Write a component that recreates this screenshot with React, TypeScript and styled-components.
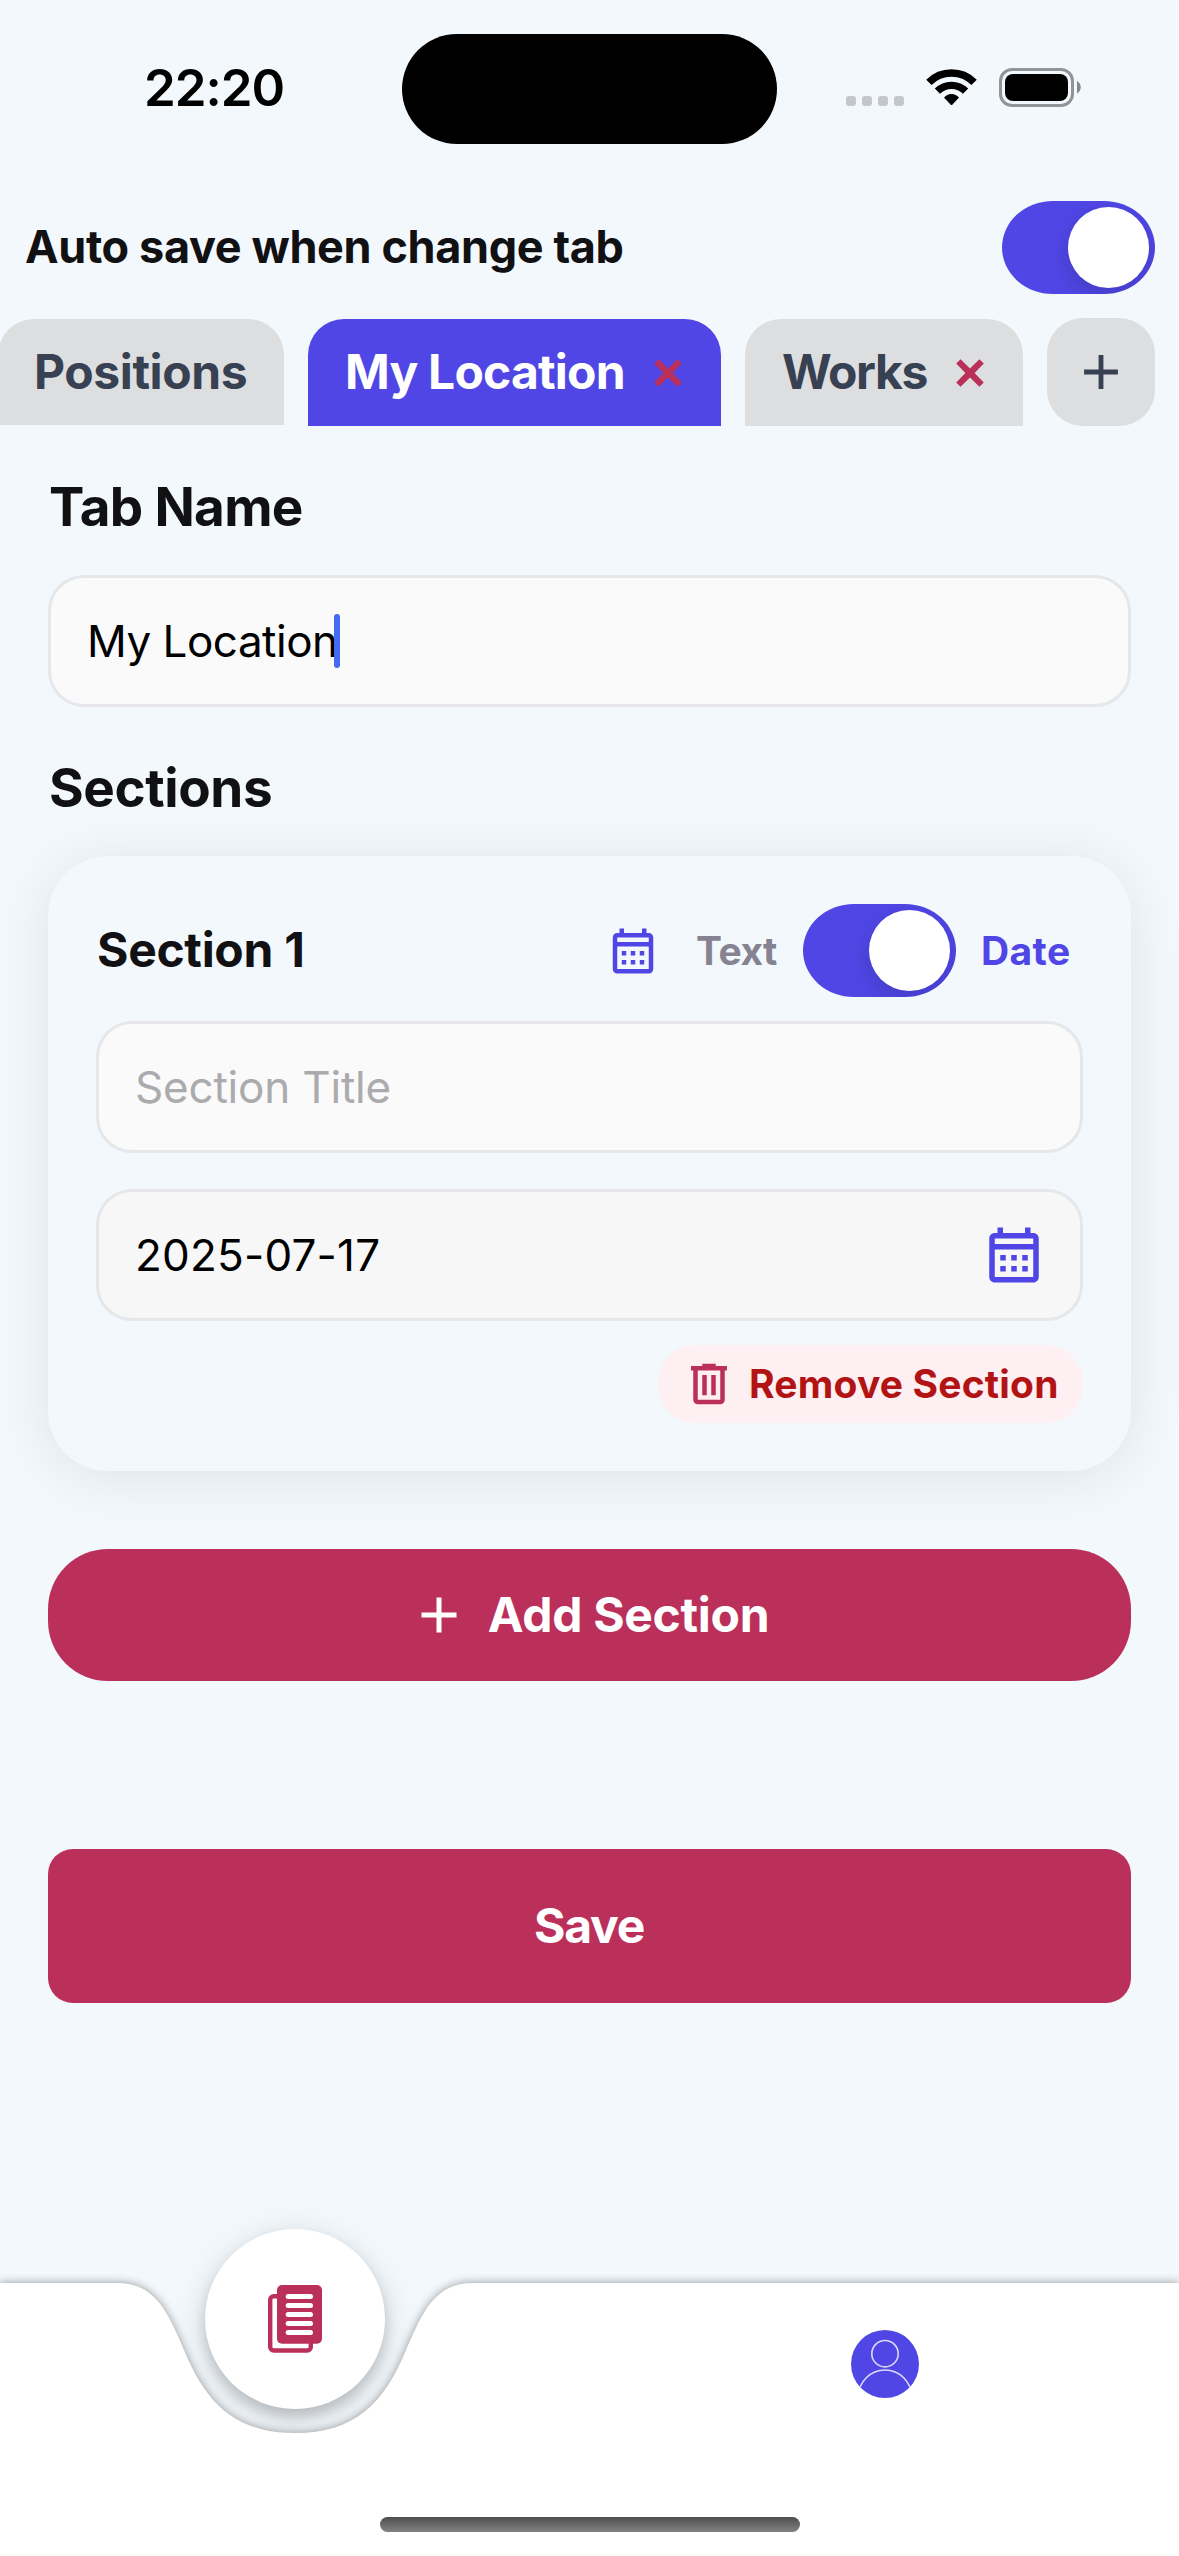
import React from 'react';
import styled, { createGlobalStyle } from 'styled-components';

const color = {
  page: '#f3f8fc',
  primary: '#4f46e5',
  accent: '#bb305b',
  tab: '#dddee0',
  slate: '#374151',
  ink: '#111113',
  line: '#e5e7eb',
};

const GlobalStyle = createGlobalStyle`
  * { box-sizing: border-box; }
  body {
    margin: 0;
    background: ${color.page};
    font-family: Inter, "Liberation Sans", sans-serif;
  }
  svg { display: block; flex: none; }
`;

const Screen = styled.main`
  display: flex;
  flex-direction: column;
  width: 1179px;
  height: 2556px;
  overflow: hidden;
  background: ${color.page};
`;

/* ---------- status bar ---------- */

const StatusBar = styled.header`
  display: grid;
  grid-template-columns: 402px 375px 1fr;
  height: 177px;
  flex: none;
`;

const Clock = styled.time`
  padding-left: 144px;
  margin-top: 57px;
  font-size: 51px;
  line-height: 62px;
  font-weight: 600;
  letter-spacing: -1px;
  color: #000;
`;

const Island = styled.div`
  height: 110px;
  margin-top: 34px;
  border-radius: 55px;
  background: #000;
`;

const StatusIcons = styled.div`
  display: flex;
  align-items: flex-start;
  gap: 22px;
  padding: 68px 0 0 69px;
`;

const SignalDots = styled.div`
  display: flex;
  gap: 6px;
  margin-top: 28px;
`;

const Dot = styled.i`
  width: 10px;
  height: 10px;
  border-radius: 3px;
  background: #c4c7cb;
`;

/* ---------- shared controls ---------- */

const Track = styled.button`
  display: flex;
  justify-content: flex-end;
  align-items: center;
  flex: none;
  width: 153px;
  height: 93px;
  padding: 0 6px;
  border: 0;
  border-radius: 51px / 46.5px;
  overflow: hidden;
  background: ${color.primary};
`;

const Thumb = styled.span`
  width: 81px;
  height: 81px;
  border-radius: 50%;
  background: #fff;
  box-shadow: 0 8px 22px rgba(0, 0, 0, 0.14);
`;

const Toggle = () => (
  <Track role="switch" aria-checked="true">
    <Thumb />
  </Track>
);

/* ---------- auto save + tabs ---------- */

const AutoSave = styled.section`
  display: flex;
  align-items: center;
  justify-content: space-between;
  flex: none;
  margin-top: 24px;
  padding: 0 24px 0 25px;
`;

const AutoSaveLabel = styled.span`
  padding-bottom: 2px;
  font-size: 45px;
  font-weight: 700;
  letter-spacing: -0.36px;
  color: ${color.ink};
`;

const TabStrip = styled.nav`
  display: flex;
  align-items: flex-end;
  gap: 24px;
  flex: none;
  height: 108px;
  margin: 24px 0 0 -2px;
`;

const Tab = styled.div<{ $width: number; $active?: boolean; $tracking: number }>`
  display: flex;
  align-items: center;
  justify-content: space-between;
  flex: none;
  width: ${(p) => p.$width}px;
  height: 107px;
  padding: 0 32px 0 37px;
  border-radius: 36px 36px 0 0;
  background: ${(p) => (p.$active ? color.primary : color.tab)};
  color: ${(p) => (p.$active ? '#fff' : color.slate)};
  font-size: 48px;
  font-weight: 700;
  letter-spacing: ${(p) => p.$tracking}px;
  white-space: nowrap;
`;

const PinnedTab = styled(Tab)`
  height: 106px;
  margin-bottom: 1px;
  padding-left: 36px;
`;

const TabName = styled.span`
  padding-bottom: 2px;
`;

const AddTab = styled.button`
  display: flex;
  align-items: center;
  justify-content: center;
  width: 108px;
  height: 108px;
  padding: 0;
  border: 0;
  border-radius: 36px;
  background: ${color.tab};
  color: ${color.slate};
`;

/* ---------- form ---------- */

const Form = styled.section`
  display: flex;
  flex-direction: column;
  flex: none;
  padding: 48px 48px 0;
`;

const Heading = styled.h2<{ $tracking: number }>`
  margin: 0 0 35px;
  padding: 1px 0 0 1px;
  font-size: 53px;
  line-height: 65px;
  font-weight: 700;
  letter-spacing: ${(p) => p.$tracking}px;
  color: ${color.ink};
`;

const Field = styled.div<{ $muted?: boolean; $placeholder?: boolean; $tracking: number; $after: number }>`
  display: flex;
  align-items: center;
  height: 132px;
  margin-bottom: ${(p) => p.$after}px;
  padding: 0 33px 0 36px;
  border: 3px solid ${color.line};
  border-radius: 36px;
  background: ${(p) => (p.$muted ? '#f7f7f7' : '#fafafa')};
  color: ${(p) => (p.$placeholder ? '#ababad' : '#000')};
  font-size: 44px;
  letter-spacing: ${(p) => p.$tracking}px;
`;

const FieldText = styled.span`
  flex: 1;
  padding-bottom: 1px;
`;

const EditedText = styled.span`
  padding-bottom: 1px;
  white-space: nowrap;
`;

const Caret = styled.i`
  width: 6px;
  height: 54px;
  margin-left: -4px;
  border-radius: 3px;
  background: #426bf2;
`;

const Card = styled.article`
  display: flex;
  flex-direction: column;
  padding: 48px;
  border-radius: 60px;
  background: ${color.page};
  box-shadow: 0 6px 60px rgba(0, 0, 0, 0.085);
`;

const CardHeader = styled.div`
  display: flex;
  align-items: center;
  height: 93px;
  margin-bottom: 24px;
  padding-right: 12px;
`;

const CardTitle = styled.h3`
  flex: 1;
  margin: 0;
  padding: 0 0 2px 1px;
  font-size: 48px;
  font-weight: 700;
  letter-spacing: -0.3px;
  color: ${color.ink};
`;

const TypeLabel = styled.span<{ $on?: boolean }>`
  width: ${(p) => (p.$on ? 90 : 83)}px;
  margin: ${(p) => (p.$on ? '0 0 0 25px' : '0 24px 0 36px')};
  font-size: 39px;
  font-weight: 700;
  letter-spacing: ${(p) => (p.$on ? 0.4 : -0.5)}px;
  white-space: nowrap;
  color: ${(p) => (p.$on ? color.primary : '#858391')};
`;

const RemoveButton = styled.button`
  display: flex;
  align-items: center;
  align-self: flex-end;
  gap: 13px;
  width: 425px;
  height: 78px;
  padding: 0 0 0 24px;
  border: 0;
  border-radius: 37px;
  background: #feeff2;
  color: #b21414;
  font: inherit;
  font-size: 39px;
  font-weight: 700;
  letter-spacing: 0.18px;
  white-space: nowrap;
`;

const WideButton = styled.button<{ $top: number; $height: number; $radius: number; $tracking: number }>`
  display: flex;
  align-items: center;
  justify-content: center;
  gap: 19px;
  height: ${(p) => p.$height}px;
  margin-top: ${(p) => p.$top}px;
  padding: 0 1px 0 0;
  border: 0;
  border-radius: ${(p) => p.$radius}px;
  background: ${color.accent};
  color: #fff;
  font: inherit;
  font-size: 48px;
  font-weight: 700;
  letter-spacing: ${(p) => p.$tracking}px;
`;

const ButtonLabel = styled.span`
  padding-bottom: 2px;
`;

/* ---------- bottom bar ---------- */

const BottomBar = styled.footer`
  position: relative;
  display: grid;
  grid-template-columns: 1fr 1fr;
  justify-items: center;
  align-items: start;
  flex: none;
  height: 273px;
  margin-top: auto;
`;

const BarShape = styled.svg`
  position: absolute;
  inset: 0;
  overflow: visible;
  filter: drop-shadow(0 0 5px rgba(0, 0, 0, 0.4));
`;

const ActiveItem = styled.div`
  display: flex;
  align-items: center;
  justify-content: center;
  width: 180px;
  height: 180px;
  margin-top: -54px;
  border-radius: 50%;
  background: #fff;
  box-shadow: 0 8px 14px rgba(0, 0, 0, 0.17), 0 8px 36px rgba(0, 0, 0, 0.13);
`;

const Item = styled.div`
  position: relative;
  margin: 47px 0 0 2px;
`;

const HomeIndicator = styled.div`
  position: absolute;
  left: 380px;
  bottom: 24px;
  width: 420px;
  height: 15px;
  border-radius: 8px;
  background: linear-gradient(#4d4d4d, #828282);
`;

/* ---------- icons ---------- */

const Wifi = () => (
  <svg width="51" height="39" viewBox="0 0 51 39" fill="none" stroke="#000">
    <path d="M2.9 14.4A32 32 0 0 1 48.1 14.4" strokeWidth="7.6" />
    <path d="M11.4 23.2A20 20 0 0 1 39.6 23.2" strokeWidth="7.4" />
    <path
      d="M18.5 29.6C22.5 25.4 28.5 25.4 32.5 29.6L25.5 37Z"
      fill="#000"
      strokeWidth="1"
      strokeLinejoin="round"
    />
  </svg>
);

const Battery = () => (
  <svg width="83" height="39" viewBox="0 0 83 39">
    <rect x="1.5" y="1.5" width="72" height="36" rx="11.5" fill="none" stroke="#919599" strokeWidth="3" />
    <rect x="6" y="6" width="63" height="27" rx="8" fill="#000" />
    <path d="M78 13C83 15.500 83 23 78 25.500Z" fill="#85898c" />
  </svg>
);

const Cross = () => (
  <svg width="42" height="42" viewBox="0 0 42 42" fill={color.accent}>
    <path d="M7.2 11.600L11.600 7.200L21 16.600L30.400 7.200L34.800 11.600L25.600 21L34.800 30.400L30.400 34.800L21 25.400L11.600 34.800L7.200 30.400L16.400 21Z" />
  </svg>
);

const Plus = ({ size = 60 }: { size?: number }) => (
  <svg width={size} height={size} viewBox="0 0 24 24" stroke="currentColor" strokeWidth="2">
    <path d="M5 12h14M12 5v14" />
  </svg>
);

const Calendar = ({ size }: { size: number }) => (
  <svg width={size} height={size} viewBox="0 0 24 24" fill={color.primary}>
    <path d="M19 4h-1V2h-2v2H8V2H6v2H5c-1.110 0-1.990.9-1.990 2L3 20c0 1.100.89 2 2 2h14c1.100 0 2-.9 2-2V6c0-1.100-.9-2-2-2zm0 16H5V10h14v10zm0-12H5V6h14v2zM9 14H7v-2h2v2zm4 0h-2v-2h2v2zm4 0h-2v-2h2v2zm-8 4H7v-2h2v2zm4 0h-2v-2h2v2zm4 0h-2v-2h2v2z" />
  </svg>
);

const Trash = () => (
  <svg width="54" height="54" viewBox="0 0 24 24" fill={color.accent}>
    <path d="M9 3v1H4v2h1v13a2 2 0 0 0 2 2h10a2 2 0 0 0 2-2V6h1V4h-5V3H9M7 6h10v13H7V6m2 2v9h2V8H9m4 0v9h2V8h-2z" />
  </svg>
);

const Pages = () => (
  <svg width="54" height="68" viewBox="0 0 54 68">
    <rect x="2.200" y="11.200" width="40.600" height="54.300" rx="3.500" fill="none" stroke={color.accent} strokeWidth="4.400" />
    <rect x="9" y="0" width="45" height="58.700" rx="5" fill={color.accent} />
    {[9, 18, 27, 36, 45].map((y) => (
      <rect key={y} x="17.700" y={y} width="27.300" height="5" rx="2.500" fill="#fff" />
    ))}
  </svg>
);

const Profile = () => (
  <svg width="68" height="68" viewBox="0 0 68 68">
    <clipPath id="avatar">
      <circle cx="34" cy="34" r="34" />
    </clipPath>
    <g clipPath="url(#avatar)" fill="none" stroke="#dcd9fb" strokeWidth="1.600">
      <rect width="68" height="68" fill={color.primary} stroke="none" />
      <circle cx="34" cy="23.700" r="13.200" />
      <circle cx="34" cy="66.500" r="26.500" />
    </g>
  </svg>
);

export default function App() {
  return (
    <>
      <GlobalStyle />
      <Screen>
        <StatusBar>
          <Clock>22:20</Clock>
          <Island />
          <StatusIcons>
            <SignalDots>
              <Dot />
              <Dot />
              <Dot />
              <Dot />
            </SignalDots>
            <Wifi />
            <Battery />
          </StatusIcons>
        </StatusBar>

        <AutoSave>
          <AutoSaveLabel>Auto save when change tab</AutoSaveLabel>
          <Toggle />
        </AutoSave>

        <TabStrip>
          <PinnedTab $width={286} $tracking={-0.4}>
            <TabName>Positions</TabName>
          </PinnedTab>
          <Tab $width={413} $active $tracking={-0.8}>
            <TabName>My Location</TabName>
            <Cross />
          </Tab>
          <Tab $width={278} $tracking={-1.4}>
            <TabName>Works</TabName>
            <Cross />
          </Tab>
          <AddTab aria-label="Add tab">
            <Plus size={58} />
          </AddTab>
        </TabStrip>

        <Form>
          <Heading $tracking={-0.7}>Tab Name</Heading>
          <Field $tracking={-0.5} $after={48}>
            <EditedText>My Location</EditedText>
            <Caret />
          </Field>

          <Heading $tracking={-0.4}>Sections</Heading>
          <Card>
            <CardHeader>
              <CardTitle>Section 1</CardTitle>
              <Calendar size={54} />
              <TypeLabel>Text</TypeLabel>
              <Toggle />
              <TypeLabel $on>Date</TypeLabel>
            </CardHeader>
            <Field $placeholder $tracking={-0.2} $after={36}>
              <FieldText>Section Title</FieldText>
            </Field>
            <Field $muted $tracking={0.2} $after={24}>
              <FieldText>2025-07-17</FieldText>
              <Calendar size={66} />
            </Field>
            <RemoveButton>
              <Trash />
              <ButtonLabel>Remove Section</ButtonLabel>
            </RemoveButton>
          </Card>

          <WideButton $top={78} $height={132} $radius={60} $tracking={-0.3}>
            <Plus />
            <ButtonLabel>Add Section</ButtonLabel>
          </WideButton>
          <WideButton $top={168} $height={154} $radius={25} $tracking={-1.2}>
            <ButtonLabel>Save</ButtonLabel>
          </WideButton>
        </Form>

        <BottomBar>
          <ActiveItem>
            <Pages />
          </ActiveItem>
          <BarShape width="1179" height="273" viewBox="0 0 1179 273" fill="#fff">
            <path
              fillRule="evenodd"
              d="M0 0H116C154 0 166 25 184 67C206 121 236 150 295 150C354 150 384 121 406 67C424 25 436 0 474 0H1179V273H0Z"
            />
          </BarShape>
          <Item>
            <Profile />
          </Item>
          <HomeIndicator />
        </BottomBar>
      </Screen>
    </>
  );
}
